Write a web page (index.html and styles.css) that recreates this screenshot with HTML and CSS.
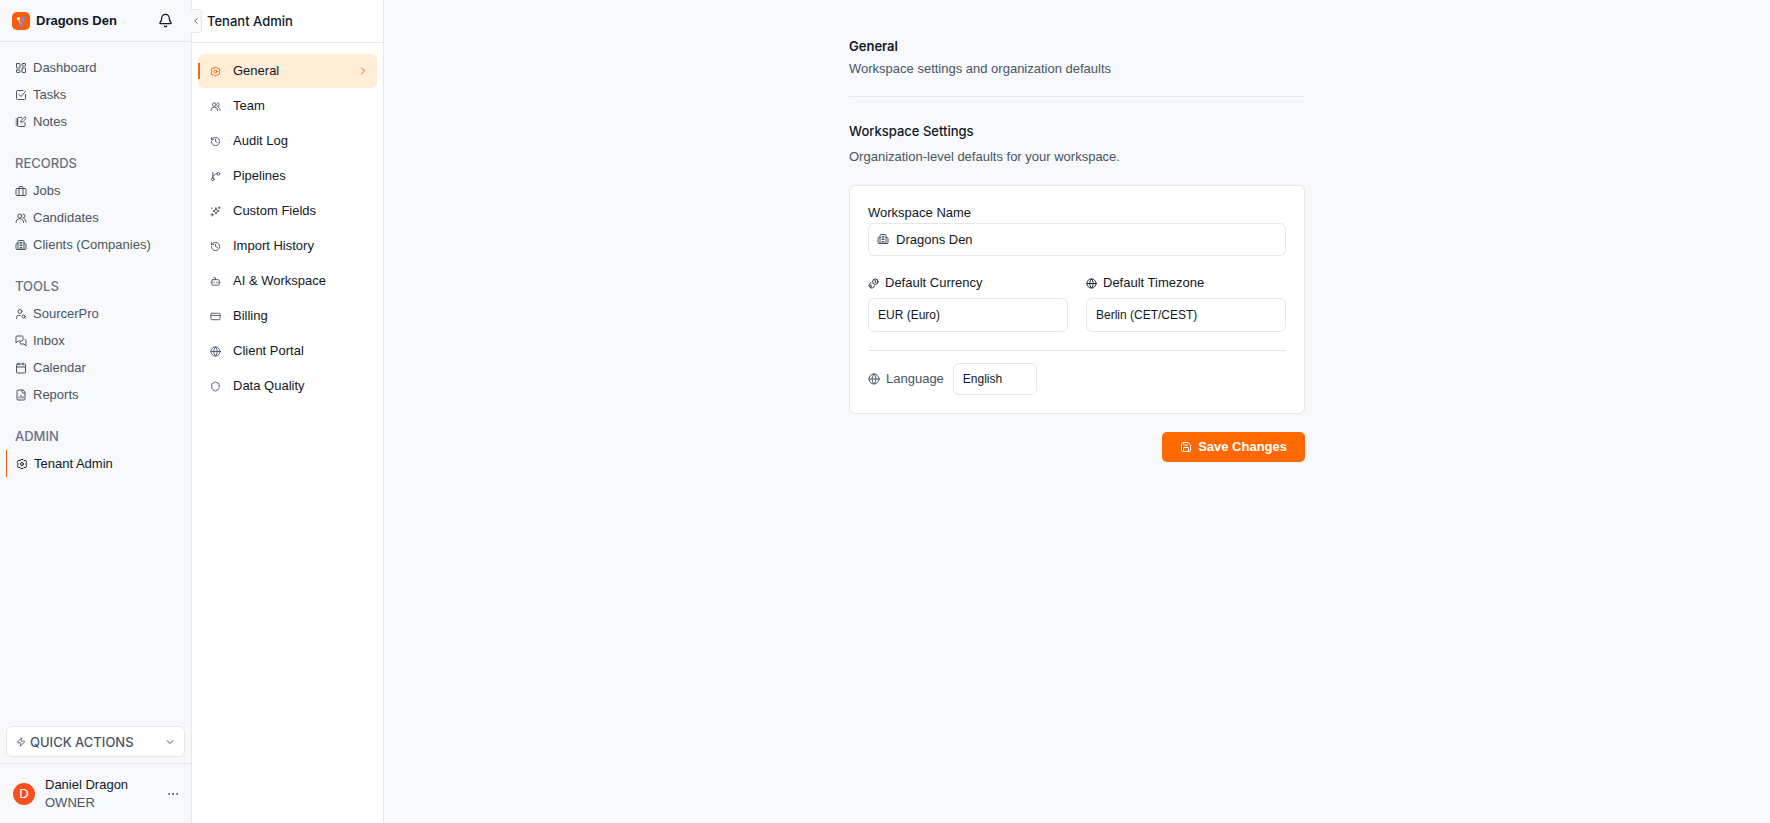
FILE: index.html
```html
<!DOCTYPE html>
<html lang="en">
<head>
    <meta charset="UTF-8">
    <meta name="viewport" content="width=device-width, initial-scale=1.0">
    <title>General - Tenant Admin</title>
    <link rel="stylesheet" href="styles.css">
</head>
<body>
    <svg class="sprite" aria-hidden="true">
        <symbol id="i-dashboard" viewBox="0 0 24 24"><rect x="3" y="3" width="7" height="9" rx="1"/><rect x="14" y="3" width="7" height="5" rx="1"/><rect x="14" y="12" width="7" height="9" rx="1"/><rect x="3" y="16" width="7" height="5" rx="1"/></symbol>
        <symbol id="i-task" viewBox="0 0 24 24"><path d="M21 11v8a2 2 0 0 1-2 2H5a2 2 0 0 1-2-2V5a2 2 0 0 1 2-2h11"/><path d="m8 11 4 4 9-10"/></symbol>
        <symbol id="i-note" viewBox="0 0 24 24"><path d="M13 3H7a2 2 0 0 0-2 2v14a2 2 0 0 0 2 2h11a2 2 0 0 0 2-2v-6"/><path d="M2 6h4M2 10h4M2 14h4M2 18h4"/><path d="M21.4 5.6a2 2 0 0 0-3-3l-6 6-1 4 4-1z"/></symbol>
        <symbol id="i-jobs" viewBox="0 0 24 24"><rect x="2" y="7" width="20" height="14" rx="2"/><path d="M8 21V5a2 2 0 0 1 2-2h4a2 2 0 0 1 2 2v16"/></symbol>
        <symbol id="i-users" viewBox="0 0 24 24"><path d="M17 21a7 7 0 0 0-15 0"/><circle cx="9.500" cy="8" r="4"/><path d="M22 20c0-3-1.500-5.500-4-7M16 4a4 4 0 0 1 0 8"/></symbol>
        <symbol id="i-building" viewBox="0 0 24 24"><path d="M6 21V5a2 2 0 0 1 2-2h8a2 2 0 0 1 2 2v16"/><path d="M6 9H4a2 2 0 0 0-2 2v8a2 2 0 0 0 2 2h16a2 2 0 0 0 2-2v-8a2 2 0 0 0-2-2h-2"/><path d="M10 21v-4h4v4M10 7h4M10 10h4M10 13h4"/></symbol>
        <symbol id="i-user-search" viewBox="0 0 24 24"><circle cx="10" cy="7" r="4"/><path d="M10.300 15H7a4 4 0 0 0-4 4v2"/><circle cx="17" cy="17" r="3"/><path d="m21 21-1.900-1.900"/></symbol>
        <symbol id="i-inbox" viewBox="0 0 24 24"><path d="M16 10a2 2 0 0 1-2 2H6l-4 4V4a2 2 0 0 1 2-2h10a2 2 0 0 1 2 2z"/><path d="M20 9a2 2 0 0 1 2 2v11l-4-4h-6a2 2 0 0 1-2-2v-1"/></symbol>
        <symbol id="i-calendar" viewBox="0 0 24 24"><path d="M8 2v4M16 2v4M3 10h18"/><rect x="3" y="4" width="18" height="18" rx="2"/></symbol>
        <symbol id="i-report" viewBox="0 0 24 24"><path d="M15 2H6a2 2 0 0 0-2 2v16a2 2 0 0 0 2 2h12a2 2 0 0 0 2-2V7z"/><path d="M14 2v4a2 2 0 0 0 2 2h4M8 18v-2M12 18v-5M16 18v-3"/></symbol>
        <symbol id="i-gear" viewBox="0 0 24 24"><path d="M9.500 3.500a4 4 0 0 1 5 0L16 5h2.500A2.500 2.500 0 0 1 21 7.500V9l-1 3 1 3v1.500a2.500 2.500 0 0 1-2.500 2.500H16l-1.500 1.500a4 4 0 0 1-5 0L8 19H5.500A2.500 2.500 0 0 1 3 16.500V15l1-3-1-3V7.500A2.500 2.500 0 0 1 5.500 5H8z"/><circle cx="12" cy="12" r="3"/></symbol>
        <symbol id="i-bell" viewBox="0 0 24 24"><path d="M10.300 21a2 2 0 0 0 3.400 0"/><path d="M3.300 15.300A1 1 0 0 0 4 17h16a1 1 0 0 0 .7-1.700C19.400 14 18 12.500 18 8A6 6 0 0 0 6 8c0 4.500-1.400 6-2.700 7.300"/></symbol>
        <symbol id="i-history" viewBox="0 0 24 24"><path d="M3 12a9 9 0 1 0 9-9 9.750 9.750 0 0 0-6.740 2.740L3 8"/><path d="M3 3v5h5M12 7v5l4 2"/></symbol>
        <symbol id="i-pipeline" viewBox="0 0 24 24"><path d="M6 3v12"/><circle cx="18" cy="6" r="3"/><circle cx="6" cy="18" r="3"/><path d="M15 6a9 9 0 0 0-9 9"/></symbol>
        <symbol id="i-sparkles" viewBox="0 0 24 24"><path d="M13 4l1.800 5.200L20 11l-5.200 1.800L13 18l-1.800-5.200L6 11l5.200-1.800z"/><path d="M20 2v4M22 4h-4M5 16v6M8 19H2M4 4v2"/></symbol>
        <symbol id="i-bot" viewBox="0 0 24 24"><path d="M12 8V4H8"/><rect x="4" y="8" width="16" height="12" rx="2"/><path d="M2 14h2M20 14h2M15 13v2M9 13v2"/></symbol>
        <symbol id="i-card" viewBox="0 0 24 24"><rect x="2" y="5" width="20" height="14" rx="2"/><path d="M2 10h20"/></symbol>
        <symbol id="i-globe" viewBox="0 0 24 24"><circle cx="12" cy="12" r="10"/><path d="M12 2a14.500 14.500 0 0 0 0 20 14.500 14.500 0 0 0 0-20M2 12h20"/></symbol>
        <symbol id="i-shield" viewBox="0 0 24 24"><path d="M20 13c0 5-3.500 7.500-8 9-4.500-1.500-8-4-8-9V6a1 1 0 0 1 1-1c2 0 4.500-1.200 6.200-2.700a1.200 1.200 0 0 1 1.600 0C14.500 3.800 17 5 19 5a1 1 0 0 1 1 1z"/></symbol>
        <symbol id="i-bolt" viewBox="0 0 24 24"><path d="M4 14a1 1 0 0 1-.8-1.600l9.900-10.200a.5.5 0 0 1 .9.460l-1.900 6A1 1 0 0 0 13 10h7a1 1 0 0 1 .8 1.600l-9.900 10.200a.5.5 0 0 1-.9-.46l1.900-6A1 1 0 0 0 11 14z"/></symbol>
        <symbol id="i-down" viewBox="0 0 24 24"><path d="m6 9 6 6 6-6"/></symbol>
        <symbol id="i-left" viewBox="0 0 24 24"><path d="m15 18-6-6 6-6"/></symbol>
        <symbol id="i-right" viewBox="0 0 24 24"><path d="m9 18 6-6-6-6"/></symbol>
        <symbol id="i-dots" viewBox="0 0 24 24"><circle cx="4" cy="12" r="1"/><circle cx="12" cy="12" r="1"/><circle cx="20" cy="12" r="1"/></symbol>
        <symbol id="i-coins" viewBox="0 0 24 24"><circle cx="16" cy="8" r="6"/><path d="M6.500 10.200A6 6 0 1 0 14 17.500"/><path d="M15 6h1.500v4M6 15v3h2"/></symbol>
        <symbol id="i-save" viewBox="0 0 24 24"><path d="M15.200 3a2 2 0 0 1 1.400.6l3.800 3.800a2 2 0 0 1 .6 1.400V19a2 2 0 0 1-2 2H5a2 2 0 0 1-2-2V5a2 2 0 0 1 2-2z"/><path d="M17 21v-7a1 1 0 0 0-1-1H8a1 1 0 0 0-1 1v7M7 3v4a1 1 0 0 0 1 1h7"/></symbol>
    </svg>

    <div class="app">
        <aside class="sidebar">
            <div class="brand">
                <svg class="logo" viewBox="0 0 18 18" aria-hidden="true">
                    <rect width="18" height="18" rx="5" fill="#f95c0c"/>
                    <circle cx="6.500" cy="6.500" r="1.600" fill="#fff"/>
                    <path d="M7 8l1.500 4.500" stroke="#f7b79a" stroke-width="1.500" stroke-linecap="round"/>
                    <path d="M11.600 5.500L9 13.500" stroke="#8a86c8" stroke-width="2.600" stroke-linecap="round"/>
                </svg>
                <span class="brand-name">Dragons Den</span>
                <button class="icon-btn" type="button" aria-label="Notifications"><svg class="icon bell"><use href="#i-bell"/></svg></button>
            </div>

            <nav class="menu" aria-label="Main">
                <div class="group">
                    <a href="#"><svg class="icon"><use href="#i-dashboard"/></svg>Dashboard</a>
                    <a href="#"><svg class="icon"><use href="#i-task"/></svg>Tasks</a>
                    <a href="#"><svg class="icon"><use href="#i-note"/></svg>Notes</a>
                </div>
                <div class="group">
                    <h2>RECORDS</h2>
                    <a href="#"><svg class="icon"><use href="#i-jobs"/></svg>Jobs</a>
                    <a href="#"><svg class="icon"><use href="#i-users"/></svg>Candidates</a>
                    <a href="#"><svg class="icon"><use href="#i-building"/></svg>Clients (Companies)</a>
                </div>
                <div class="group">
                    <h2>TOOLS</h2>
                    <a href="#"><svg class="icon"><use href="#i-user-search"/></svg>SourcerPro</a>
                    <a href="#"><svg class="icon"><use href="#i-inbox"/></svg>Inbox</a>
                    <a href="#"><svg class="icon"><use href="#i-calendar"/></svg>Calendar</a>
                    <a href="#"><svg class="icon"><use href="#i-report"/></svg>Reports</a>
                </div>
                <div class="group">
                    <h2>ADMIN</h2>
                    <a href="#" class="active"><svg class="icon"><use href="#i-gear"/></svg>Tenant Admin</a>
                </div>
            </nav>

            <div class="quick">
                <button class="quick-btn" type="button">
                    <svg class="icon tiny"><use href="#i-bolt"/></svg>
                    <span>QUICK ACTIONS</span>
                    <svg class="icon"><use href="#i-down"/></svg>
                </button>
            </div>
            <div class="user">
                <span class="avatar">D</span>
                <div class="user-info">
                    <div class="user-name">Daniel Dragon</div>
                    <div>OWNER</div>
                </div>
                <button class="icon-btn" type="button" aria-label="Account menu"><svg class="icon"><use href="#i-dots"/></svg></button>
            </div>
        </aside>

        <section class="panel">
            <button class="collapse" type="button" aria-label="Collapse sidebar"><svg class="icon tiny"><use href="#i-left"/></svg></button>
            <h1 class="panel-title">Tenant Admin</h1>
            <nav class="panel-menu" aria-label="Tenant Admin">
                <a href="#" class="active"><svg class="icon small"><use href="#i-gear"/></svg><span>General</span><svg class="icon"><use href="#i-right"/></svg></a>
                <a href="#"><svg class="icon small"><use href="#i-users"/></svg><span>Team</span></a>
                <a href="#"><svg class="icon small"><use href="#i-history"/></svg><span>Audit Log</span></a>
                <a href="#"><svg class="icon small"><use href="#i-pipeline"/></svg><span>Pipelines</span></a>
                <a href="#"><svg class="icon small"><use href="#i-sparkles"/></svg><span>Custom Fields</span></a>
                <a href="#"><svg class="icon small"><use href="#i-history"/></svg><span>Import History</span></a>
                <a href="#"><svg class="icon small"><use href="#i-bot"/></svg><span>AI &amp; Workspace</span></a>
                <a href="#"><svg class="icon small"><use href="#i-card"/></svg><span>Billing</span></a>
                <a href="#"><svg class="icon small"><use href="#i-globe"/></svg><span>Client Portal</span></a>
                <a href="#"><svg class="icon small"><use href="#i-shield"/></svg><span>Data Quality</span></a>
            </nav>
        </section>

        <main class="content">
            <form class="settings">
                <header class="page-head">
                    <h2>General</h2>
                    <p>Workspace settings and organization defaults</p>
                </header>
                <div class="section-head">
                    <h3>Workspace Settings</h3>
                    <p>Organization-level defaults for your workspace.</p>
                </div>

                <div class="card">
                    <label for="name">Workspace Name</label>
                    <div class="input-wrap">
                        <svg class="icon"><use href="#i-building"/></svg>
                        <input type="text" id="name" value="Dragons Den">
                    </div>
                    <div class="row">
                        <div class="field">
                            <label for="currency"><svg class="icon small"><use href="#i-coins"/></svg>Default Currency</label>
                            <select id="currency"><option>EUR (Euro)</option></select>
                        </div>
                        <div class="field">
                            <label for="timezone"><svg class="icon small"><use href="#i-globe"/></svg>Default Timezone</label>
                            <select id="timezone"><option>Berlin (CET/CEST)</option></select>
                        </div>
                    </div>
                    <div class="language">
                        <label for="language"><svg class="icon"><use href="#i-globe"/></svg>Language</label>
                        <select id="language"><option>English</option></select>
                    </div>
                </div>

                <div class="actions">
                    <button class="save" type="submit"><svg class="icon"><use href="#i-save"/></svg>Save Changes</button>
                </div>
            </form>
        </main>
    </div>
</body>
</html>
```
FILE: styles.css
```css
* {
    box-sizing: border-box;
}
body {
    margin: 0;
    font-family: "Liberation Sans", Arial, sans-serif;
    font-size: 13px;
    line-height: 18px;
    color: #101828;
    background: #f6f8fa;
}
h1, h2, h3, p {
    margin: 0;
    font-size: 13px;
}
h1, h2, h3, .quick-btn span {
    font-family: Inter, "Liberation Sans", sans-serif;
}
a {
    color: inherit;
    text-decoration: none;
}
button, input, select {
    font: inherit;
    color: inherit;
}
button {
    cursor: pointer;
}
.sprite {
    position: absolute;
    width: 0;
    height: 0;
}
.icon {
    width: 12px;
    height: 12px;
    flex: none;
    fill: none;
    stroke: currentColor;
    stroke-width: 2;
    stroke-linecap: round;
    stroke-linejoin: round;
}
.icon.small {
    width: 11px;
    height: 11px;
}
.icon.tiny {
    width: 10px;
    height: 10px;
}
.icon-btn {
    display: flex;
    padding: 0;
    border: 0;
    background: none;
}

.app {
    display: flex;
    min-height: 100vh;
}

/* sidebar */
.sidebar {
    width: 192px;
    flex: none;
    display: flex;
    flex-direction: column;
    border-right: 1px solid #e5e7eb;
    color: #4a5565;
}
.brand {
    display: flex;
    align-items: center;
    height: 42px;
    padding: 0 18px 0 12px;
    border-bottom: 1px solid #e5e7eb;
    color: #101828;
}
.logo {
    width: 18px;
    height: 18px;
    margin-right: 6px;
}
.brand-name {
    flex: 1;
    font-weight: 600;
}
.icon.bell {
    width: 15px;
    height: 15px;
}
.menu {
    flex: 1;
    display: flex;
    flex-direction: column;
    gap: 14px;
    padding: 12px 0 12px 6px;
}
.menu h2 {
    padding: 5px 9px;
    font-weight: 500;
    color: #6a7282;
}
.menu a {
    display: flex;
    align-items: center;
    gap: 6px;
    height: 27px;
    padding: 0 9px;
}
.menu a.active {
    border-left: 1px solid #ea580c;
    color: #101828;
}
.quick {
    padding: 6px;
    border-bottom: 1px solid #e5e7eb;
}
.quick-btn {
    display: flex;
    align-items: center;
    gap: 4px;
    width: 100%;
    height: 31px;
    padding: 0 8px 0 9px;
    border: 1px solid #e5e7eb;
    border-radius: 6px;
    background: #fff;
    font-weight: 500;
}
.quick-btn span {
    flex: 1;
    text-align: left;
}
.user {
    display: flex;
    align-items: center;
    gap: 10px;
    padding: 12px 12px 11px 13px;
}
.avatar {
    width: 22px;
    height: 22px;
    border-radius: 50%;
    line-height: 22px;
    text-align: center;
    color: #fff;
    background: #f4511e;
}
.user-info {
    flex: 1;
}
.user-name {
    color: #101828;
    font-weight: 500;
}

/* tenant admin panel */
.panel {
    position: relative;
    width: 192px;
    flex: none;
    border-right: 1px solid #e5e7eb;
    background: #fff;
}
.collapse {
    position: absolute;
    top: 9px;
    left: -1px;
    display: flex;
    align-items: center;
    width: 11px;
    height: 24px;
    padding: 0;
    border: 1px solid #e5e7eb;
    border-left: 0;
    border-radius: 0 4px 4px 0;
    background: #f6f8fa;
    color: #4a5565;
}
.panel-title {
    height: 43px;
    padding: 0 15px;
    line-height: 42px;
    font-weight: 500;
    border-bottom: 1px solid #e5e7eb;
}
.panel-menu {
    display: flex;
    flex-direction: column;
    gap: 1px;
    padding: 11px 6px;
}
.panel-menu a {
    display: flex;
    align-items: center;
    gap: 12px;
    height: 34px;
    padding: 0 8px 0 12px;
    border-radius: 6px;
}
.panel-menu span {
    flex: 1;
}
.panel-menu .icon {
    color: #4a5565;
}
.panel-menu .active {
    position: relative;
    background: #ffedd5;
}
.panel-menu .active .icon {
    color: #ea580c;
}
.panel-menu .active::before {
    content: "";
    position: absolute;
    left: 0;
    top: 9px;
    width: 2px;
    height: 16px;
    background: #f26a12;
}

/* settings form */
.content {
    flex: 1;
    padding: 37px 24px;
}
.settings {
    max-width: 456px;
    margin: 0 auto;
}
.page-head {
    padding-bottom: 18px;
    border-bottom: 1px solid #e5e7eb;
}
.page-head h2 {
    font-weight: 600;
    margin-bottom: 5px;
}
.content p {
    color: #4a5565;
}
.section-head {
    padding: 25px 0 19px;
}
.section-head h3 {
    font-weight: 500;
    margin-bottom: 8px;
}
.card {
    padding: 18px;
    border: 1px solid #e5e7eb;
    border-radius: 6px;
    background: #fff;
}
.card label {
    display: flex;
    align-items: center;
    gap: 6px;
    font-weight: 500;
}
input, select {
    width: 100%;
    border: 1px solid #e5e7eb;
    border-radius: 6px;
    background: #fff;
}
input {
    height: 33px;
    padding: 0 10px 0 27px;
}
select {
    appearance: none;
    height: 34px;
    padding: 0 9px;
    font-size: 12px;
}
.input-wrap {
    position: relative;
    margin-top: 1px;
}
.input-wrap .icon {
    position: absolute;
    left: 9px;
    top: 10px;
    color: #4a5565;
}
.row {
    display: grid;
    grid-template-columns: 1fr 1fr;
    gap: 18px;
    padding: 18px 0;
    border-bottom: 1px solid #e5e7eb;
}
.field label {
    margin-bottom: 6px;
}
.language {
    display: flex;
    align-items: center;
    gap: 9px;
    padding-top: 12px;
}
.card .language label {
    font-weight: 400;
    color: #4a5565;
}
.language select {
    width: 84px;
    height: 32px;
}
.actions {
    display: flex;
    justify-content: flex-end;
    padding-top: 18px;
}
.save {
    display: flex;
    align-items: center;
    gap: 6px;
    height: 30px;
    padding: 0 18px;
    border: 0;
    border-radius: 5px;
    background: #ff6900;
    color: #fff;
    font-weight: 700;
}
```
